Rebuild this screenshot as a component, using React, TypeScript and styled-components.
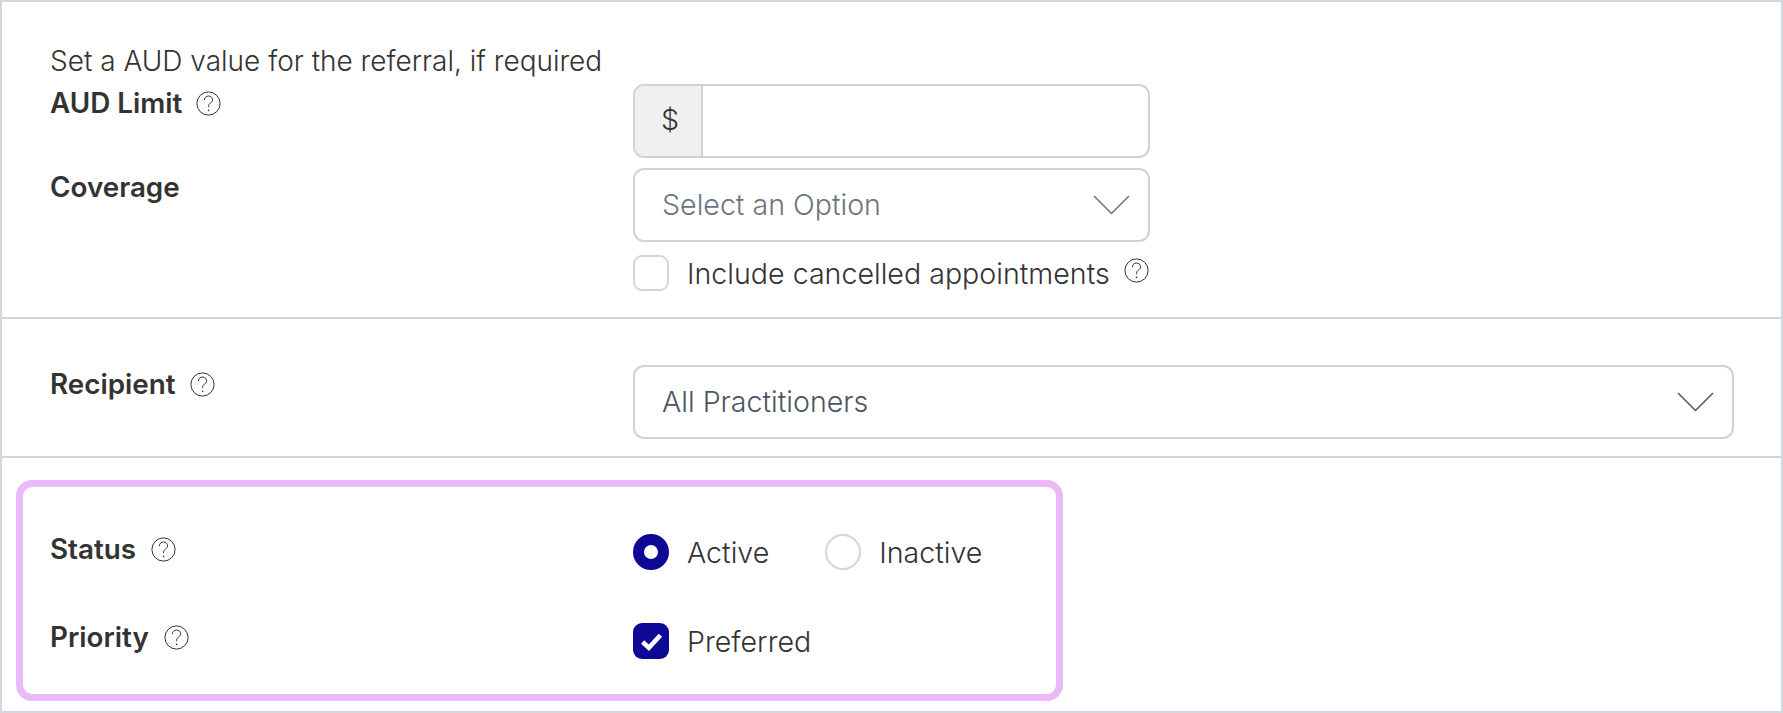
import React from 'react'
import styled, { createGlobalStyle } from 'styled-components'

const GlobalStyle = createGlobalStyle`
  html, body {
    margin: 0;
    padding: 0;
    background: #fff;
  }
  * {
    box-sizing: border-box;
  }
`

function HelpIcon() {
  return (
    <HelpSvg viewBox="0 0 25 25" fill="none">
      <circle cx="12.5" cy="12.5" r="11.6" stroke="#333" strokeWidth="1" />
      <path
        d="M8.4 9.2c0-2.6 1.8-4.2 4.1-4.2 2.3 0 4.1 1.6 4.1 3.8 0 1.6-1 2.5-2.1 3.3-1.1.8-1.9 1.6-1.9 3.2v1"
        stroke="#333"
        strokeWidth="1"
      />
      <circle cx="12.6" cy="19.4" r=".8" fill="#333" />
    </HelpSvg>
  )
}

function Chevron({ color }: { color: string }) {
  return (
    <ChevronSvg viewBox="0 0 37 20" fill="none">
      <path d="M1 1l17.5 17.5L36 1" stroke={color} strokeWidth="1.5" />
    </ChevronSvg>
  )
}

export default function App() {
  return (
    <>
      <GlobalStyle />
      <Page>
        <TopSection>
          <Hint>Set a AUD value for the referral, if required</Hint>
          <Row>
            <Label>
              AUD Limit <HelpIcon />
            </Label>
            <InputGroup>
              <Addon>$</Addon>
              <Field />
            </InputGroup>
          </Row>
          <CoverageRow>
            <Label>Coverage</Label>
            <Stack>
              <Select>
                <Placeholder>Select an Option</Placeholder>
                <Chevron color="#6b7480" />
              </Select>
              <Option>
                <CheckBox />
                <OptionText>Include cancelled appointments</OptionText>
                <RaisedHelp>
                  <HelpIcon />
                </RaisedHelp>
              </Option>
            </Stack>
          </CoverageRow>
        </TopSection>
        <RecipientSection>
          <Row>
            <Label>
              Recipient <HelpIcon />
            </Label>
            <Select>
              <Value>All Practitioners</Value>
              <Chevron color="#4b5563" />
            </Select>
          </Row>
        </RecipientSection>
        <Highlight>
          <Row>
            <HighlightLabel>
              Status <HelpIcon />
            </HighlightLabel>
            <Options>
              <Option>
                <Radio $checked />
                <OptionText>Active</OptionText>
              </Option>
              <Option>
                <Radio />
                <OptionText>Inactive</OptionText>
              </Option>
            </Options>
          </Row>
          <PriorityRow>
            <HighlightLabel>
              Priority <HelpIcon />
            </HighlightLabel>
            <ShiftedOption>
              <CheckedBox>
                <svg width="23" height="19" viewBox="0 0 22 18" fill="none">
                  <path d="M2.5 9.5l6 5.5L19.5 3" stroke="#fff" strokeWidth="4.4" />
                </svg>
              </CheckedBox>
              <OptionText>Preferred</OptionText>
            </ShiftedOption>
          </PriorityRow>
        </Highlight>
      </Page>
    </>
  )
}

const Page = styled.div`
  width: 1783px;
  height: 713px;
  border: 2px solid #d4d7dc;
  font-family: Inter, "Liberation Sans", sans-serif;
  font-size: 28.6px;
  font-weight: 300;
  line-height: 36px;
  color: #333;
  overflow: hidden;
`

const TopSection = styled.section`
  height: 317px;
  padding: 41px 0 0 48px;
  border-bottom: 2px solid #d1d5db;
`

const Hint = styled.div`
  height: 41px;
  font-size: 28px;
`

const Row = styled.div`
  display: grid;
  grid-template-columns: 583px 1fr;
`

const CoverageRow = styled(Row)`
  margin-top: 10px;
`

const Label = styled.label`
  display: flex;
  align-items: center;
  gap: 14px;
  height: 36px;
  margin-top: 1px;
  font-size: 27.8px;
  font-weight: 600;
`

const HighlightLabel = styled(Label)`
  gap: 15px;
`

const HelpSvg = styled.svg`
  width: 25px;
  height: 25px;
  flex: none;
`

const ChevronSvg = styled.svg`
  width: 37px;
  height: 20px;
  flex: none;
`

const InputGroup = styled.div`
  display: flex;
  width: 517px;
  height: 74px;
  border: 2px solid #cdd3da;
  border-radius: 11px;
  overflow: hidden;
`

const Addon = styled.div`
  display: flex;
  align-items: center;
  justify-content: center;
  width: 68px;
  padding: 0 0 3px 4px;
  background: #f0f0f0;
  border-right: 2px solid #cdd3da;
`

const Field = styled.div`
  flex: 1;
`

const Stack = styled.div`
  display: flex;
  flex-direction: column;
  gap: 13px;
  width: 517px;
`

const Select = styled.div`
  display: flex;
  align-items: center;
  justify-content: space-between;
  height: 74px;
  padding: 0 18px 0 27px;
  border: 2px solid #cdd3da;
  border-radius: 11px;
`

const Placeholder = styled.span`
  color: #6b7480;
`

const Value = styled.span`
  color: #4b5563;
`

const RecipientSection = styled.section`
  height: 139px;
  padding: 46px 47px 0 48px;
  border-bottom: 2px solid #d1d5db;
`

const Highlight = styled.section`
  width: 1047px;
  height: 221px;
  margin: 22px 0 0 14px;
  padding: 43px 0 0 27px;
  border: 7px solid #ebb9f9;
  border-radius: 16px;
`

const PriorityRow = styled(Row)`
  margin-top: 48px;
`

const Options = styled.div`
  display: flex;
  gap: 56px;
  margin-top: 4px;
`

const Option = styled.div`
  display: flex;
  align-items: center;
  gap: 18px;
`

const ShiftedOption = styled(Option)`
  margin-top: 5px;
`

const OptionText = styled.span`
  position: relative;
  top: 1px;
`

const RaisedHelp = styled.span`
  display: flex;
  margin: -6px 0 0 -4px;
`

const CheckBox = styled.span`
  width: 36px;
  height: 36px;
  flex: none;
  border: 2px solid #d1d5dc;
  border-radius: 9px;
`

const CheckedBox = styled.span`
  display: flex;
  align-items: center;
  justify-content: center;
  width: 36px;
  height: 36px;
  flex: none;
  background: #0e0896;
  border-radius: 9px;
`

const Radio = styled.span<{ $checked?: boolean }>`
  width: 36px;
  height: 36px;
  flex: none;
  border-radius: 50%;
  border: ${({ $checked }) => ($checked ? '11px solid #0e0896' : '2px solid #d1d5dc')};
  background: #fff;
`
